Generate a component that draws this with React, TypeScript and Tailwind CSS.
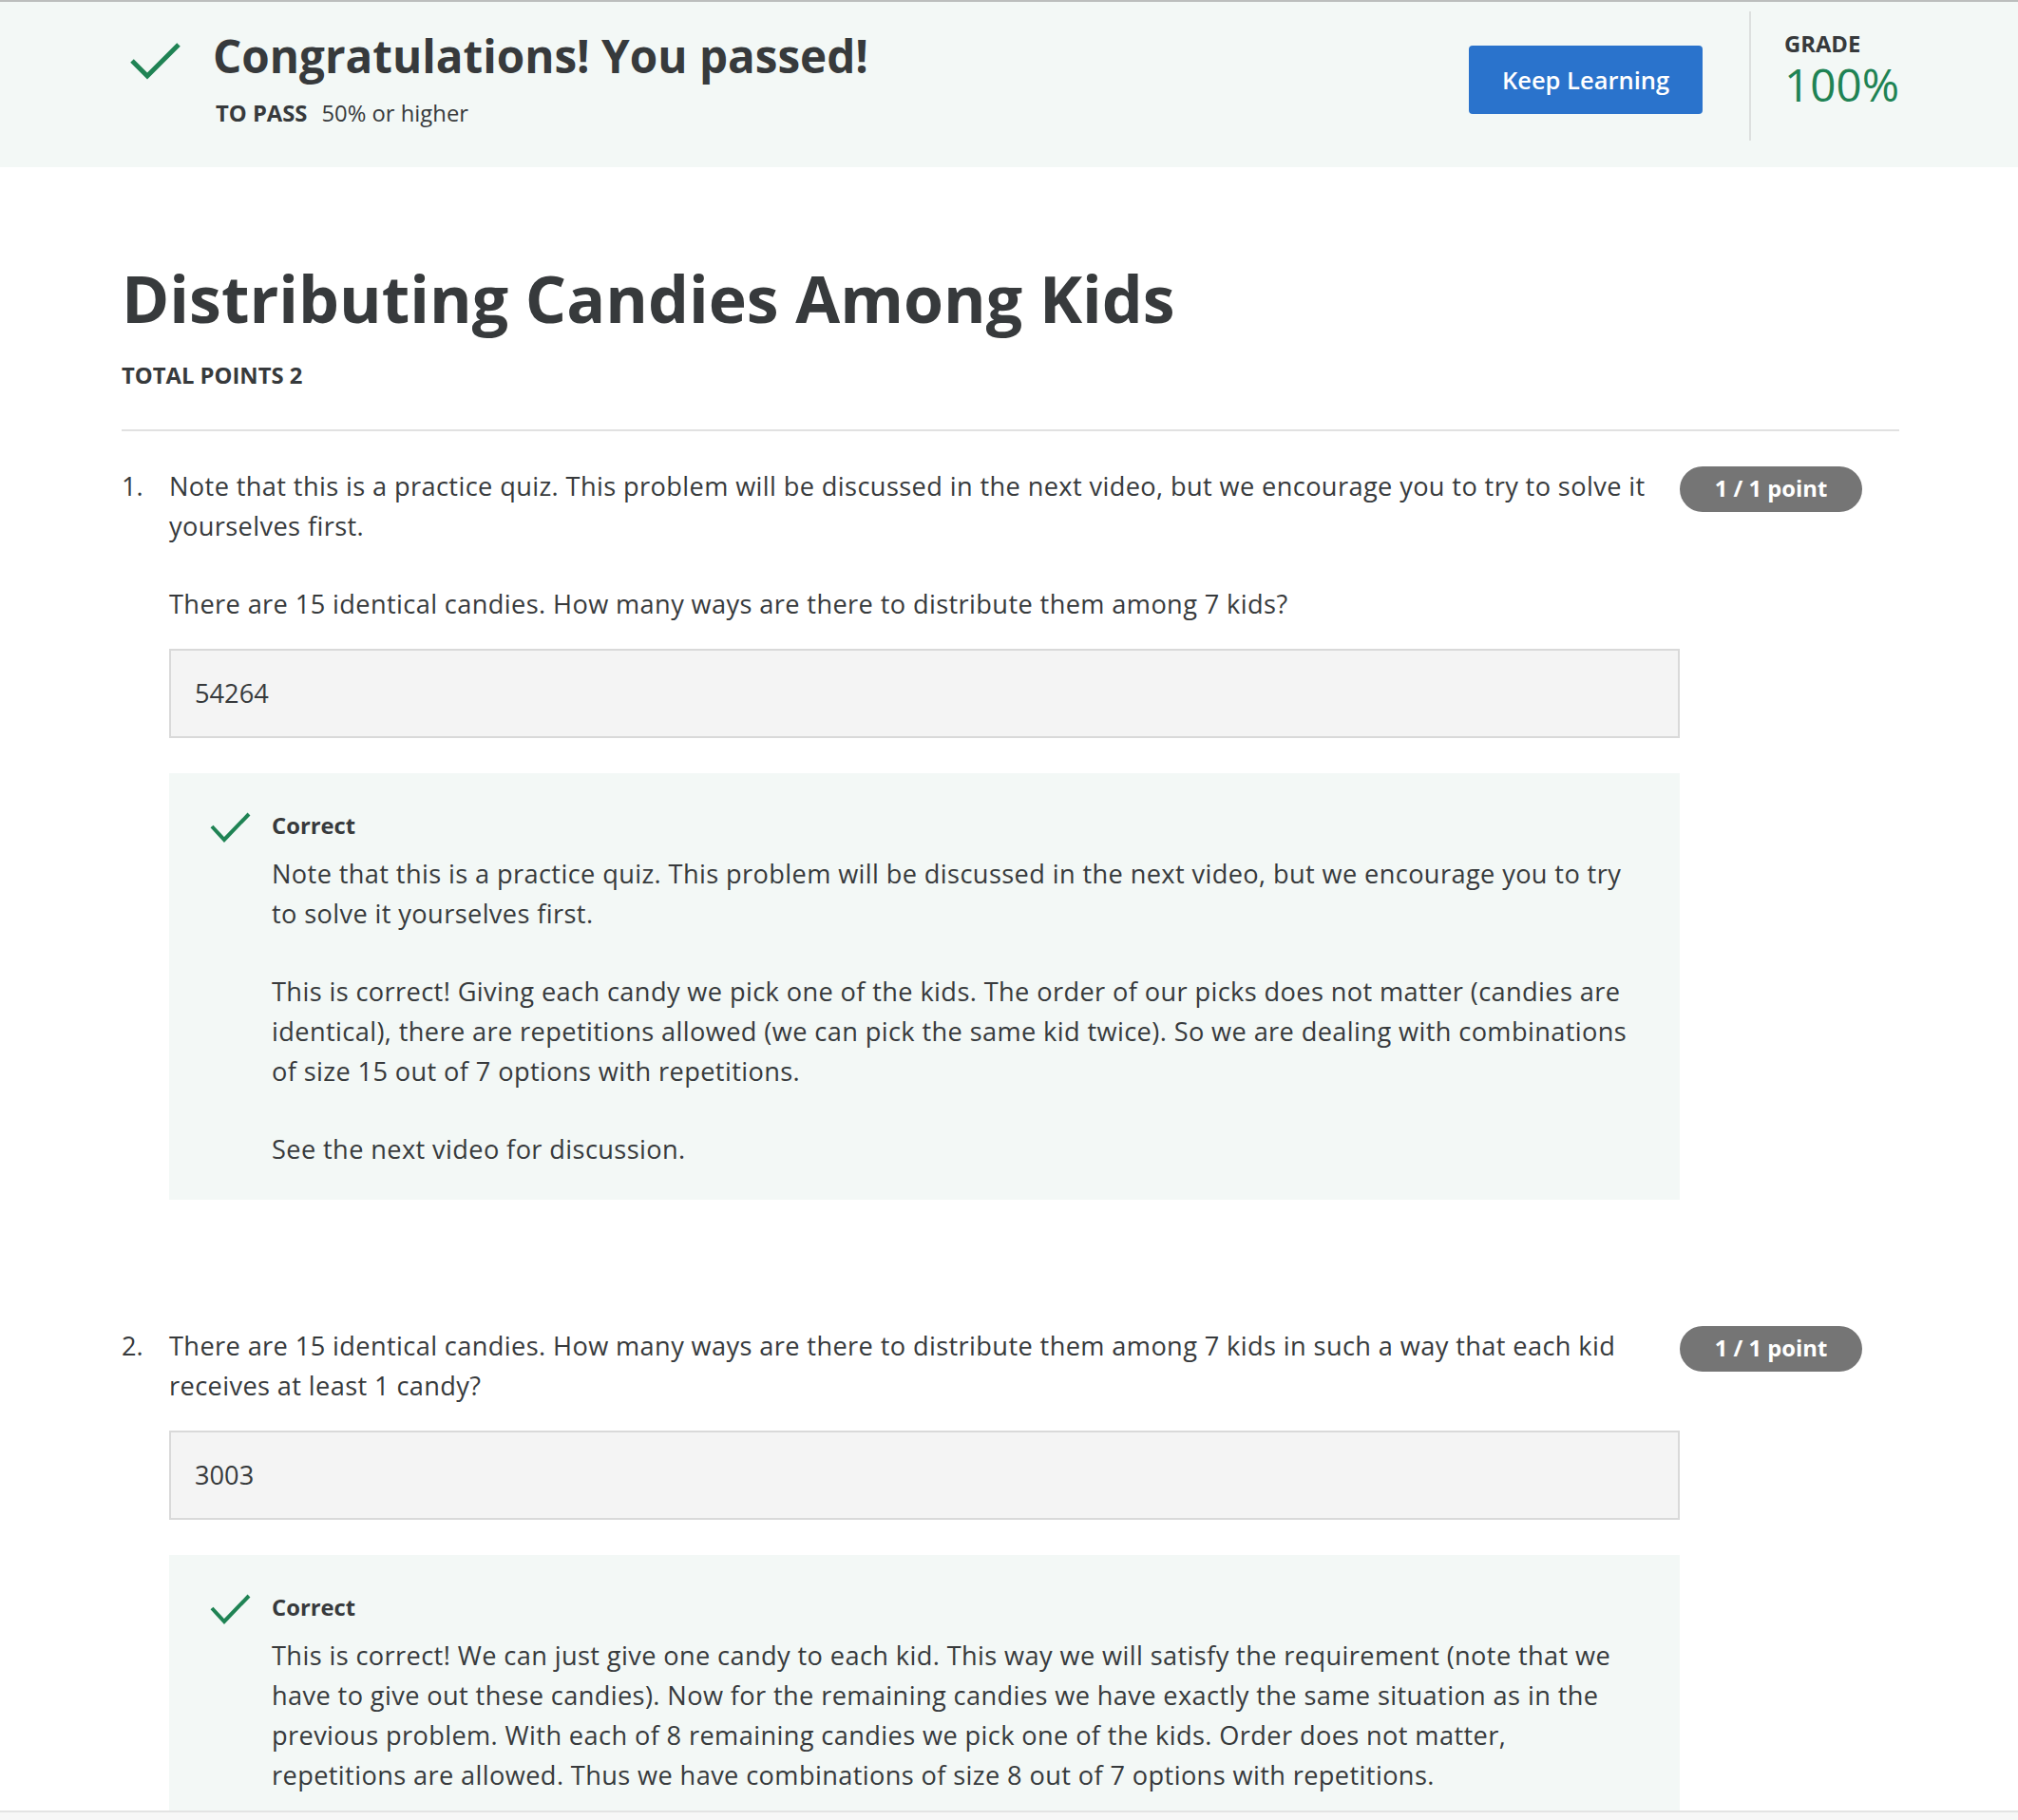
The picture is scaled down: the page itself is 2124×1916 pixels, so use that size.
import React from "react";

const GREEN = "#1f8354";

function HeaderCheck() {
  return (
    <svg width="57" height="42" viewBox="0 0 57 42" className="shrink-0 mt-[40px]">
      <polyline points="4,22 20,38 53,5" fill="none" stroke={GREEN} strokeWidth="5" />
    </svg>
  );
}

function SmallCheck() {
  return (
    <svg width="45" height="34" viewBox="0 0 45 34" className="block mt-[2px]">
      <polyline points="3,15 16,29 42,2" fill="none" stroke={GREEN} strokeWidth="4" />
    </svg>
  );
}

function Feedback({ paragraphs }: { paragraphs: string[] }) {
  return (
    <div className="bg-[#f3f8f6] mt-[37px] pt-[39px] pb-[32px] pl-[42px] pr-[42px] flex">
      <div className="w-[66px] shrink-0">
        <SmallCheck />
      </div>
      <div className="flex-1 min-w-0">
        <div className="text-[23.8px] font-bold leading-[32px]">Correct</div>
        <div className="mt-[14px] text-[27.2px] leading-[42px] tracking-[0.38px]">
          {paragraphs.map((p, i) => (
            <p key={i} className={i < paragraphs.length - 1 ? "mb-[40px]" : ""}>
              {p}
            </p>
          ))}
        </div>
      </div>
    </div>
  );
}

function Question({
  num,
  paragraphs,
  answer,
  feedback,
}: {
  num: string;
  paragraphs: string[];
  answer: string;
  feedback: string[];
}) {
  return (
    <div className="flex">
      <div className="w-[50px] shrink-0 text-[27.2px] leading-[42px]">{num}</div>
      <div className="w-[1590px] shrink-0">
        <div className="text-[27.2px] leading-[42px] tracking-[0.38px] pr-[20px]">
          {paragraphs.map((p, i) => (
            <p key={i} className={i < paragraphs.length - 1 ? "mb-[40px]" : ""}>
              {p}
            </p>
          ))}
        </div>
        <div className="mt-[26px] h-[94px] border-2 border-[#d9d9d9] bg-[#f4f4f4] flex items-center px-[25px] text-[27.2px] leading-[42px]">
          {answer}
        </div>
        <Feedback paragraphs={feedback} />
      </div>
      <div className="w-[192px] h-[48px] shrink-0 rounded-full bg-[#757575] text-white font-bold text-[23.8px] flex items-center justify-center">
        1 / 1 point
      </div>
    </div>
  );
}

export default function App() {
  return (
    <div className="relative w-[2124px] h-[1916px] overflow-hidden bg-white text-[#373a3c] font-['Open_Sans',sans-serif]">
      <header className="h-[176px] border-t-2 border-[#bcbebd] bg-[#f3f8f6] flex pl-[135px] pr-[125px]">
        <div className="flex items-start">
          <HeaderCheck />
          <div className="ml-[32px] pt-[29px]">
            <h1 className="text-[47.6px] font-bold leading-[56px]">Congratulations! You passed!</h1>
            <div className="mt-[16px] ml-[3px] text-[23.8px] leading-[32px] flex">
              <span className="font-bold">TO PASS</span>
              <span className="ml-[15px]">50% or higher</span>
            </div>
          </div>
        </div>
        <div className="ml-auto flex items-start">
          <button className="mt-[46px] w-[246px] h-[72px] rounded-[4px] bg-[#2a73cc] text-white text-[25.5px] font-semibold flex items-center justify-center">
            Keep Learning
          </button>
          <div className="ml-[49px] mt-[10px] w-[2px] h-[136px] bg-[#dde0df]" />
          <div className="ml-[35px] mt-[29px] w-[121px]">
            <div className="text-[23.8px] font-bold leading-[30px]">GRADE</div>
            <div className="text-[47.6px] leading-[56px] text-[#1f8354]">100%</div>
          </div>
        </div>
      </header>

      <main className="pl-[128px] pr-[125px]">
        <h2 className="mt-[98px] text-[68px] font-bold leading-[80px]">Distributing Candies Among Kids</h2>
        <div className="mt-[25px] text-[23.8px] font-bold leading-[32px]">TOTAL POINTS 2</div>
        <div className="mt-[41px] h-[2px] bg-[#e1e1e1]" />

        <div className="mt-[37px]">
          <Question
            num="1."
            paragraphs={[
              "Note that this is a practice quiz. This problem will be discussed in the next video, but we encourage you to try to solve it yourselves first.",
              "There are 15 identical candies. How many ways are there to distribute them among 7 kids?",
            ]}
            answer="54264"
            feedback={[
              "Note that this is a practice quiz. This problem will be discussed in the next video, but we encourage you to try to solve it yourselves first.",
              "This is correct! Giving each candy we pick one of the kids. The order of our picks does not matter (candies are identical), there are repetitions allowed (we can pick the same kid twice). So we are dealing with combinations of size 15 out of 7 options with repetitions.",
              "See the next video for discussion.",
            ]}
          />
        </div>

        <div className="mt-[133px]">
          <Question
            num="2."
            paragraphs={[
              "There are 15 identical candies. How many ways are there to distribute them among 7 kids in such a way that each kid receives at least 1 candy?",
            ]}
            answer="3003"
            feedback={[
              "This is correct! We can just give one candy to each kid. This way we will satisfy the requirement (note that we have to give out these candies). Now for the remaining candies we have exactly the same situation as in the previous problem. With each of 8 remaining candies we pick one of the kids. Order does not matter, repetitions are allowed. Thus we have combinations of size 8 out of 7 options with repetitions.",
            ]}
          />
        </div>
      </main>

      <div className="absolute left-0 right-0 bottom-0 h-[10px] border-t-2 border-[#e3e3e3] bg-[#f7f7f7]" />
    </div>
  );
}
